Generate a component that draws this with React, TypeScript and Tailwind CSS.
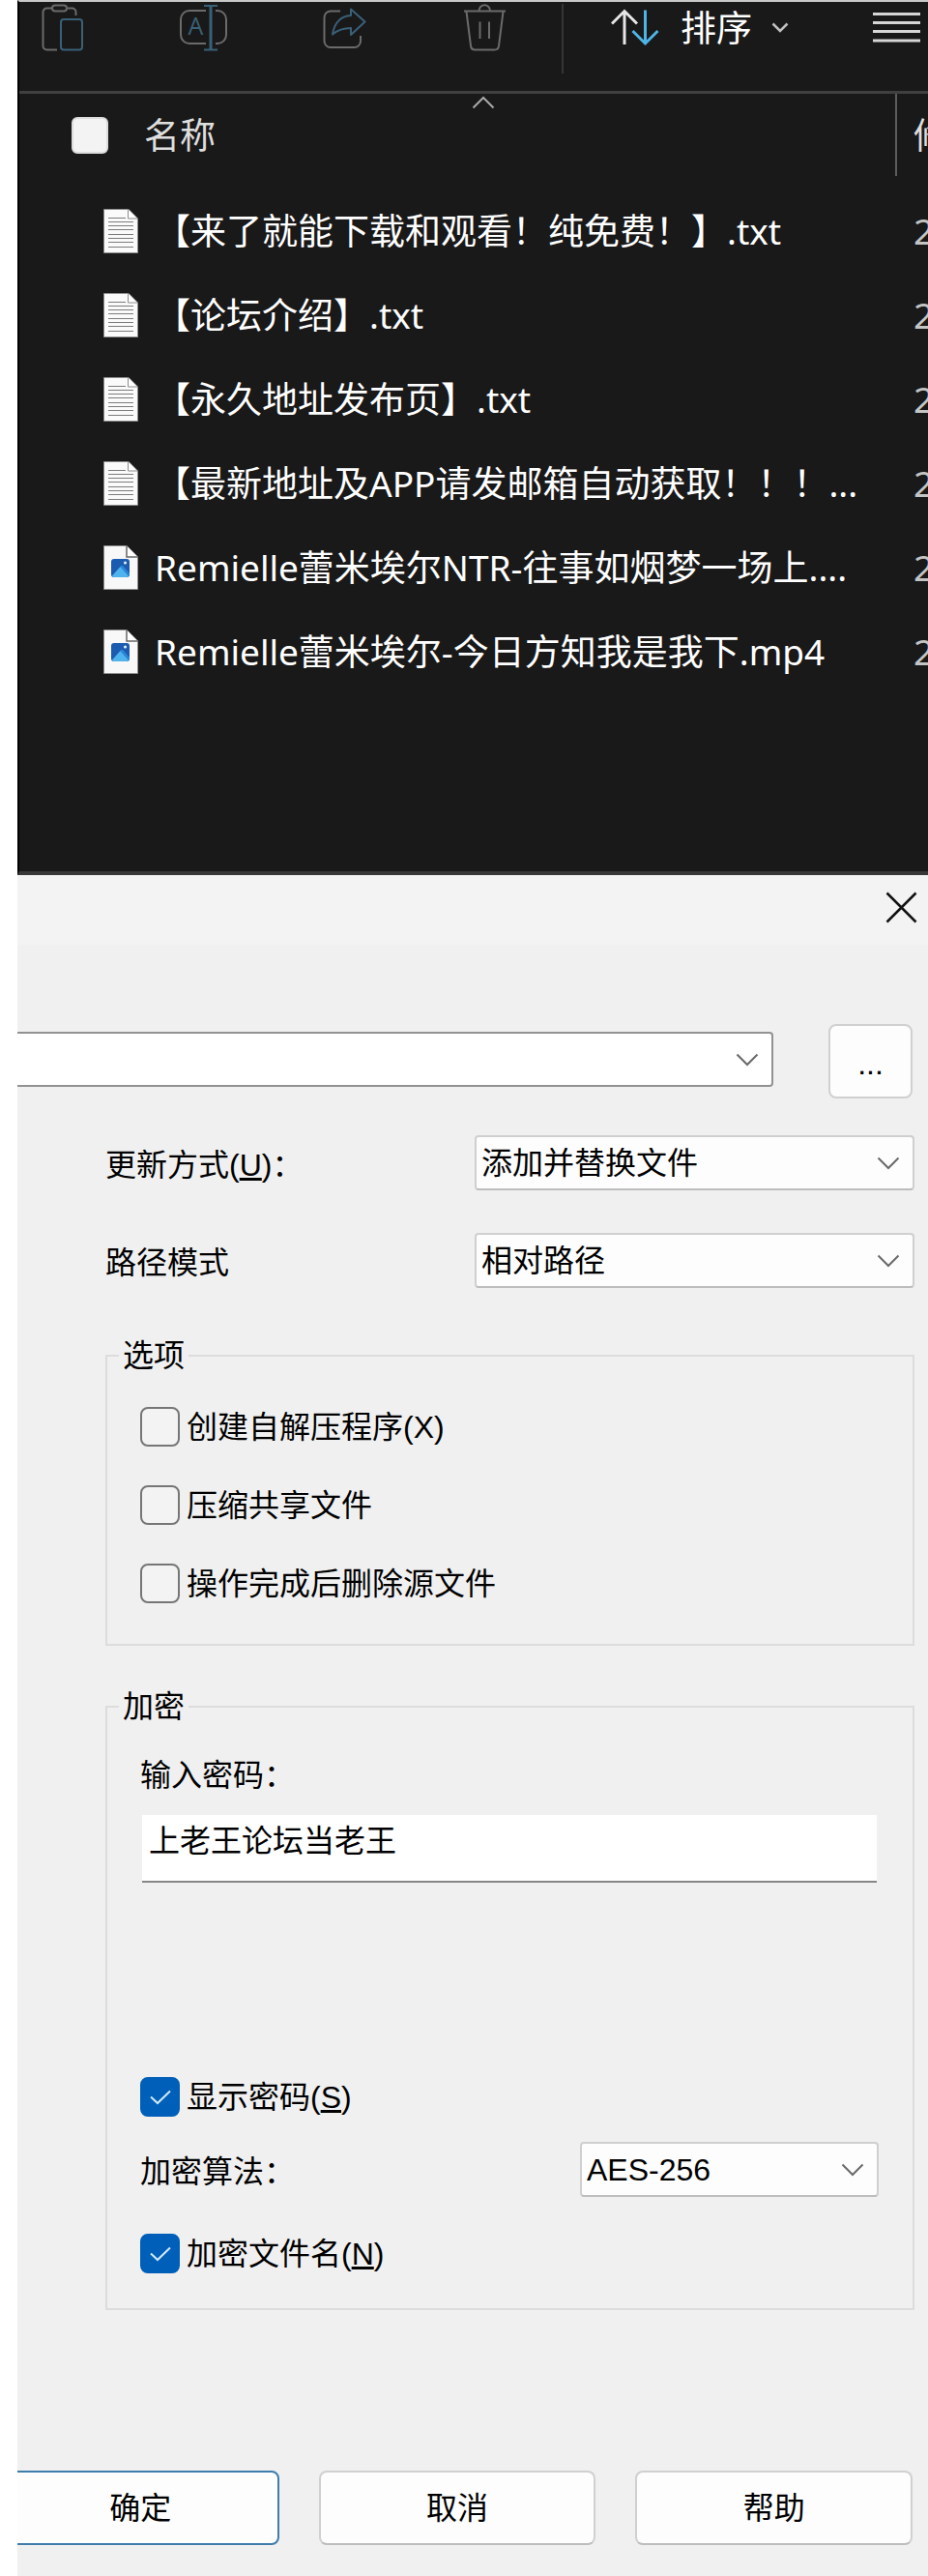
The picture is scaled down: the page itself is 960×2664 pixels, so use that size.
import { useState, type ReactNode } from "react";

const FILES = [
  { name: "【来了就能下载和观看！纯免费！】.txt", kind: "txt" },
  { name: "【论坛介绍】.txt", kind: "txt" },
  { name: "【永久地址发布页】.txt", kind: "txt" },
  { name: "【最新地址及APP请发邮箱自动获取！！！...", kind: "txt" },
  { name: "Remielle蕾米埃尔NTR-往事如烟梦一场上....", kind: "video" },
  { name: "Remielle蕾米埃尔-今日方知我是我下.mp4", kind: "video" },
];

/* ---------- Toolbar icons ---------- */

const GRAY = "#6b6b6b";
const BLUE = "#3a6078";

function PasteIcon() {
  return (
    <svg width="50" height="50" viewBox="0 0 50 50" fill="none" strokeWidth="2">
      <path
        d="M14 4.5H8.5a4 4 0 0 0-4 4v35a4 4 0 0 0 4 4H19M30 4.5h4.5a4 4 0 0 1 4 4V12"
        stroke={GRAY}
      />
      <rect x="14" y="1.5" width="15" height="6" rx="3" stroke={GRAY} />
      <rect x="23" y="16" width="22" height="31.5" rx="3" stroke={BLUE} />
    </svg>
  );
}

function RenameIcon() {
  return (
    <svg width="50" height="50" viewBox="0 0 50 50" fill="none" strokeWidth="2">
      <path
        d="M27 7H10a9 9 0 0 0-9 9v16a9 9 0 0 0 9 9h17M37 7h2a9 9 0 0 1 9 9v16a9 9 0 0 1-9 9h-2"
        stroke={GRAY}
      />
      <text
        x="16.5"
        y="32"
        textAnchor="middle"
        fontSize="25"
        fontFamily="Open Sans, sans-serif"
        fill={BLUE}
      >
        A
      </text>
      <path d="M25 2h14M25 47.5h14" stroke={BLUE} />
      <path d="M32 2v45" stroke={BLUE} strokeWidth="3" />
    </svg>
  );
}

function ShareIcon() {
  return (
    <svg width="50" height="50" viewBox="0 0 50 50" fill="none" strokeWidth="2">
      <path
        d="M20 7.5H10a6.5 6.5 0 0 0-6.5 6.5v24.5a6.5 6.5 0 0 0 6.5 6.5h24.5a6.5 6.5 0 0 0 6.5-6.5V33"
        stroke={GRAY}
      />
      <path
        d="M31 5.5 45.5 18.5 31 32v-7c-8 0-13 1.5-19 6.5 1.5-11 8-19 19-19.5z"
        stroke={BLUE}
        strokeLinejoin="round"
      />
    </svg>
  );
}

function TrashIcon() {
  return (
    <svg width="50" height="50" viewBox="0 0 50 50" fill="none" stroke={GRAY} strokeWidth="2">
      <path d="M2 7.5h43M17.5 7a5.5 5.5 0 0 1 11.5 0M4.5 8l4.500 35.5a4.5 4.5 0 0 0 4.5 4h20a4.5 4.5 0 0 0 4.5-4L42.5 8" />
      <path d="M18.5 18.5V36M28 18.5V36" />
    </svg>
  );
}

function SortIcon() {
  return (
    <svg width="50" height="50" viewBox="0 0 50 50" fill="none" strokeWidth="3">
      <path d="M14 7v35M1 20.5 14 7.5l13 13" stroke="#e6e6e6" />
      <path d="M35.5 6.5V41M22.5 28l13 13 13-13" stroke="#4db4e6" />
    </svg>
  );
}

function Chevron({ className = "" }: { className?: string }) {
  return (
    <svg width="24" height="14" viewBox="0 0 24 14" fill="none" className={className}>
      <path d="M1.5 1.5 12 12 22.5 1.5" stroke="currentColor" strokeWidth="2" />
    </svg>
  );
}

/* ---------- File icons ---------- */

function TextFileIcon() {
  const lines = [13, 17, 21, 26, 30, 34, 39];
  return (
    <svg width="36" height="46" viewBox="0 0 36 46" className="shrink-0">
      <path d="M0.5 0.5H26L35.5 10v35.5H0.5z" fill="#fafafa" stroke="#8c8c8c" />
      <path d="M25.5 0.5V10H35" fill="#fff" stroke="#8c8c8c" />
      <path d="M5 9.5h18" stroke="#7c7c7c" />
      {lines.map((y) => (
        <path key={y} d={`M5 ${y}.5h26`} stroke="#7c7c7c" />
      ))}
    </svg>
  );
}

function VideoFileIcon() {
  return (
    <svg width="36" height="46" viewBox="0 0 36 46" className="shrink-0">
      <path d="M0.5 0.5H24L35.5 12v33.5H0.5z" fill="#f8f8f8" stroke="#8c8c8c" />
      <path d="M24 0.5V12h11.5" fill="#fff" stroke="#666" strokeWidth="1.5" />
      <rect x="8" y="14" width="19" height="19" rx="3" fill="#1c5cb0" />
      <path d="M9 31.5 17.5 22l8.5 9.5a3 3 0 0 1-2 1.5H11a3 3 0 0 1-2-1.5z" fill="#4fb4ee" />
      <path d="M17.5 22 27 32v-3l-6.5-7.5a2 2 0 0 0-3 .5z" fill="#2b86d9" />
      <circle cx="22.5" cy="18" r="1.5" fill="#e8f6ff" />
    </svg>
  );
}

/* ---------- Form parts ---------- */

interface CheckProps {
  label: ReactNode;
  initial?: boolean;
  className?: string;
}

function Check({ label, initial = false, className = "" }: CheckProps) {
  const [checked, setChecked] = useState(initial);
  return (
    <label className={`flex items-center gap-[7px] ${className}`}>
      <span className="grid place-items-center">
        <input
          type="checkbox"
          checked={checked}
          onChange={(e) => setChecked(e.target.checked)}
          className="col-start-1 row-start-1 size-[41px] appearance-none rounded-lg border-2 border-[#767676] bg-[#f3f3f3] checked:border-[#005fb8] checked:bg-[#005fb8]"
        />
        {checked && (
          <svg
            width="22"
            height="16"
            viewBox="0 0 22 16"
            fill="none"
            className="pointer-events-none col-start-1 row-start-1"
          >
            <path d="M1 7.5 8 14 21 1.5" stroke="#cfeaff" strokeWidth="2" />
          </svg>
        )}
      </span>
      <span>{label}</span>
    </label>
  );
}

interface DropdownProps {
  id: string;
  options: string[];
  className: string;
  boxClass?: string;
  label?: string;
}

function Dropdown({ id, options, className, boxClass, label }: DropdownProps) {
  const box = boxClass ?? "rounded-sm border-[#cfcfcf] border-b-[#bdbdbd] bg-[#fdfdfd]";
  return (
    <div className={`grid items-center ${className}`}>
      <select
        id={id}
        aria-label={label}
        className={`col-start-1 row-start-1 size-full appearance-none border-2 pr-12 pl-[5px] ${box}`}
      >
        {options.map((o) => (
          <option key={o}>{o}</option>
        ))}
      </select>
      <Chevron className="pointer-events-none col-start-1 row-start-1 mr-[15px] justify-self-end text-[#6a6a6a]" />
    </div>
  );
}

/* ---------- Panels ---------- */

function FileExplorer() {
  return (
    <section className="border-t-2 border-b-4 border-l-2 border-t-[#c8c8c8] border-b-[#383838] border-l-black bg-[#191919] pb-[184px] font-['Noto_Sans','Noto_Sans_CJK_SC',sans-serif] text-[37px] leading-[48px] text-white">
      <div className="flex h-[95px] items-start border-b-[3px] border-[#404040] pt-[2px] pr-2 pl-5">
        <div className="flex gap-24">
          <button aria-label="粘贴">
            <PasteIcon />
          </button>
          <button aria-label="重命名">
            <RenameIcon />
          </button>
          <button aria-label="共享">
            <ShareIcon />
          </button>
          <button aria-label="删除">
            <TrashIcon />
          </button>
        </div>
        <div className="ml-[53px] h-[72px] w-[2px] bg-[#353535]" />
        <button className="ml-[49px] flex h-[50px] items-center">
          <SortIcon />
          <span className="ml-[22px]">排序</span>
          <svg width="18" height="12" viewBox="0 0 18 12" fill="none" className="ml-5">
            <path d="M1.5 1.5 9 9l7.5-7.5" stroke="#c0c0c0" strokeWidth="2.5" />
          </svg>
        </button>
        <button aria-label="查看" className="ml-auto">
          <svg width="49" height="50" viewBox="0 0 49 50">
            <path d="M0 10.5h49M0 19.5h49M0 28.5h49M0 38h49" stroke="#d6d6d6" strokeWidth="3" />
          </svg>
        </button>
      </div>

      <table className="w-full table-fixed">
        <thead>
          <tr className="h-[98px]">
            <th className="p-0 text-left align-top font-normal">
              <div className="flex h-[85px] border-r-2 border-[#5c5c5c] pl-[54px]">
                <div className="relative flex flex-1 items-center">
                  <input
                    type="checkbox"
                    aria-label="全选"
                    className="mr-[37px] size-[38px] appearance-none rounded-md border-2 border-[#dcdcdc] bg-[#f3f3f3]"
                  />
                  <span className="text-[#dedede]">名称</span>
                  <span className="absolute inset-x-0 top-[2px] flex justify-center">
                    <Chevron className="rotate-180 text-[#a8a8a8]" />
                  </span>
                </div>
              </div>
            </th>
            <th className="w-8 p-0 text-left align-top font-normal">
              <div className="flex h-[85px] items-center pl-[17px] whitespace-nowrap text-[#dedede]">
                修
              </div>
            </th>
          </tr>
        </thead>
        <tbody>
          {FILES.map((f) => (
            <tr key={f.name} className="h-[87px]">
              <td className="p-0">
                <div className="flex items-center gap-[17px] pl-[87px] whitespace-nowrap">
                  {f.kind === "txt" ? <TextFileIcon /> : <VideoFileIcon />}
                  <span>{f.name}</span>
                </div>
              </td>
              <td className="p-0 pl-[17px] whitespace-nowrap text-[#c4c4c4]">2</td>
            </tr>
          ))}
        </tbody>
      </table>
    </section>
  );
}

function ArchiveDialog() {
  const [password, setPassword] = useState("上老王论坛当老王");
  const button = "h-[77px] flex-1 rounded-lg border-2 bg-[#fdfdfd]";

  return (
    <section className="flex-1 overflow-hidden bg-[#f0f0f0] pb-[31px] font-['Liberation_Sans','Noto_Sans_CJK_SC',sans-serif] text-[32px] leading-8 text-black">
      <div className="flex h-[72px] items-start justify-end bg-[#f3f3f3] pt-[17px] pr-[11px]">
        <button aria-label="关闭">
          <svg width="33" height="33" viewBox="0 0 33 33" fill="none">
            <path d="m1.5 1.5 30 30m0-30-30 30" stroke="#111" strokeWidth="2.5" />
          </svg>
        </button>
      </div>

      <form onSubmit={(e) => e.preventDefault()}>
        <div className="mt-[82px] flex items-start pr-4">
          <Dropdown
            id="archive"
            label="压缩包"
            options={[""]}
            className="mt-2 mr-[57px] h-[57px] flex-1"
            boxClass="rounded-r-sm border-l-0 border-[#929292] bg-white"
          />
          <button type="button" className="h-[77px] w-[87px] rounded-lg border-2 border-[#d0d0d0] bg-[#fdfdfd] pt-1">
            ...
          </button>
        </div>

        <div className="pr-[14px] pl-[91px]">
          <div className="mt-[38px] flex items-center justify-between">
            <label htmlFor="update" className="pt-1">
              更新方式(<u>U</u>)：
            </label>
            <Dropdown id="update" options={["添加并替换文件"]} className="h-[57px] w-[455px]" />
          </div>
          <div className="mt-11 flex items-center justify-between">
            <label htmlFor="path" className="pt-1">
              路径模式
            </label>
            <Dropdown id="path" options={["相对路径"]} className="h-[57px] w-[455px]" />
          </div>

          <fieldset className="mt-[54px] flex flex-col gap-10 border-2 border-[#dcdcdc] px-[34px] pt-[37px] pb-[42px]">
            <legend className="-ml-[22px] px-1">选项</legend>
            <Check label="创建自解压程序(X)" />
            <Check label="压缩共享文件" />
            <Check label="操作完成后删除源文件" />
          </fieldset>

          <fieldset className="mt-[47px] border-2 border-[#dcdcdc] pt-[39px] pr-[35px] pb-9 pl-[34px]">
            <legend className="-ml-[22px] px-1">加密</legend>
            <label htmlFor="password" className="block">
              输入密码：
            </label>
            <div className="mt-[25px] px-[2px]">
              <input
                id="password"
                type="text"
                value={password}
                onChange={(e) => setPassword(e.target.value)}
                className="block h-[70px] w-full border-b-2 border-[#868686] bg-white px-[7px] pb-5"
              />
            </div>
            <Check
              className="mt-[201px]"
              initial
              label={
                <>
                  显示密码(<u>S</u>)
                </>
              }
            />
            <div className="mt-[26px] flex items-center justify-between">
              <label htmlFor="method" className="pt-1">
                加密算法：
              </label>
              <Dropdown id="method" options={["AES-256"]} className="h-[57px] w-[309px]" />
            </div>
            <Check
              className="mt-[38px]"
              initial
              label={
                <>
                  加密文件名(<u>N</u>)
                </>
              }
            />
          </fieldset>
        </div>

        <div className="mt-[166px] -ml-4 flex gap-[41px] pr-4">
          <button type="submit" className={`${button} border-[#3f7dab]`}>
            确定
          </button>
          <button type="button" className={`${button} border-[#d0d0d0] border-b-[#bdbdbd]`}>
            取消
          </button>
          <button type="button" className={`${button} border-[#d0d0d0] border-b-[#bdbdbd]`}>
            帮助
          </button>
        </div>
      </form>
    </section>
  );
}

export default function App() {
  return (
    <main className="flex min-h-screen flex-col overflow-hidden bg-white pl-[18px]">
      <FileExplorer />
      <ArchiveDialog />
    </main>
  );
}
